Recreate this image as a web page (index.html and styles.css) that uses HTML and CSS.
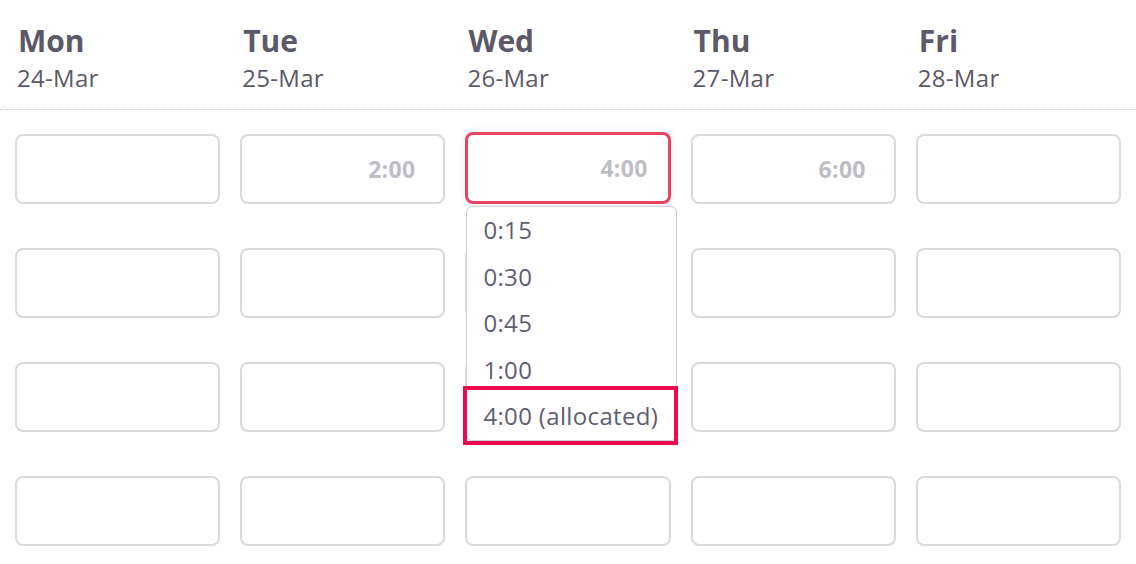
FILE: index.html
```html
<!DOCTYPE html>
<html>
<head>
<meta charset="utf-8">
<link rel="stylesheet" href="styles.css">
</head>
<body>
<div class="header">
  <div class="day"><div class="name">Mon</div><div class="date">24-Mar</div></div>
  <div class="day"><div class="name">Tue</div><div class="date">25-Mar</div></div>
  <div class="day"><div class="name">Wed</div><div class="date">26-Mar</div></div>
  <div class="day"><div class="name">Thu</div><div class="date">27-Mar</div></div>
  <div class="day"><div class="name">Fri</div><div class="date">28-Mar</div></div>
</div>
<div class="grid">
  <div class="cell"><div class="box"></div></div>
  <div class="cell"><div class="box">2:00</div></div>
  <div class="cell open">
    <div class="box focused">4:00</div>
    <ul class="dropdown">
      <li class="item">0:15</li>
      <li class="item">0:30</li>
      <li class="item">0:45</li>
      <li class="item">1:00</li>
      <li class="item marked">4:00 (allocated)</li>
    </ul>
  </div>
  <div class="cell"><div class="box">6:00</div></div>
  <div class="cell"><div class="box"></div></div>

  <div class="cell"><div class="box"></div></div>
  <div class="cell"><div class="box"></div></div>
  <div class="cell"><div class="box"></div></div>
  <div class="cell"><div class="box"></div></div>
  <div class="cell"><div class="box"></div></div>

  <div class="cell"><div class="box"></div></div>
  <div class="cell"><div class="box"></div></div>
  <div class="cell"><div class="box"></div></div>
  <div class="cell"><div class="box"></div></div>
  <div class="cell"><div class="box"></div></div>

  <div class="cell"><div class="box"></div></div>
  <div class="cell"><div class="box"></div></div>
  <div class="cell"><div class="box"></div></div>
  <div class="cell"><div class="box"></div></div>
  <div class="cell"><div class="box"></div></div>
</div>
</body>
</html>
```
FILE: styles.css
```css
* { box-sizing: border-box; }
html, body {
  margin: 0;
  padding: 0;
  background: #ffffff;
  font-family: "Open Sans", "Noto Sans", sans-serif;
  color: #5c5968;
}
.header {
  display: grid;
  grid-template-columns: repeat(5, 1fr);
  column-gap: 20px;
  padding: 21px 15px 14px;
  border-bottom: 1px dotted #cacacd;
}
.day {
  padding-left: 2px;
}
.name {
  font-size: 30px;
  font-weight: 700;
  line-height: 40px;
  padding-left: 1px;
}
.date {
  font-size: 24px;
  line-height: 34px;
  letter-spacing: 0.3px;
}
.grid {
  display: grid;
  grid-template-columns: repeat(5, 1fr);
  column-gap: 20px;
  row-gap: 44px;
  padding: 24px 15px 0;
}
.cell {
  position: relative;
}
.box {
  height: 70px;
  border: 2px solid #dad9de;
  border-radius: 8px;
  background: #fff;
  display: flex;
  align-items: center;
  justify-content: flex-end;
  padding: 0 28px 0 0;
  font-size: 23px;
  font-weight: 700;
  letter-spacing: 0.3px;
  color: #bebdc6;
}
.box.focused {
  margin-top: -2px;
  height: 72px;
  border: 3px solid #e9435f;
  padding-right: 20px;
  box-shadow: 0 0 10px rgba(40, 30, 60, 0.08);
}
.dropdown {
  position: absolute;
  z-index: 2;
  top: calc(100% + 2px);
  left: 1px;
  width: 211px;
  margin: 0;
  padding: 0;
  list-style: none;
  background: #fff;
  border: 1px solid #cfced5;
  border-radius: 6px;
}
.item {
  position: relative;
  height: 46.5px;
  line-height: 46px;
  padding-left: 16px;
  font-size: 24px;
  letter-spacing: 0.35px;
  color: #615e70;
}
.item.marked::after {
  content: "";
  position: absolute;
  top: -7px;
  bottom: -5px;
  left: -4px;
  right: -2px;
  border: 4px solid #ee0a4f;
}
```
